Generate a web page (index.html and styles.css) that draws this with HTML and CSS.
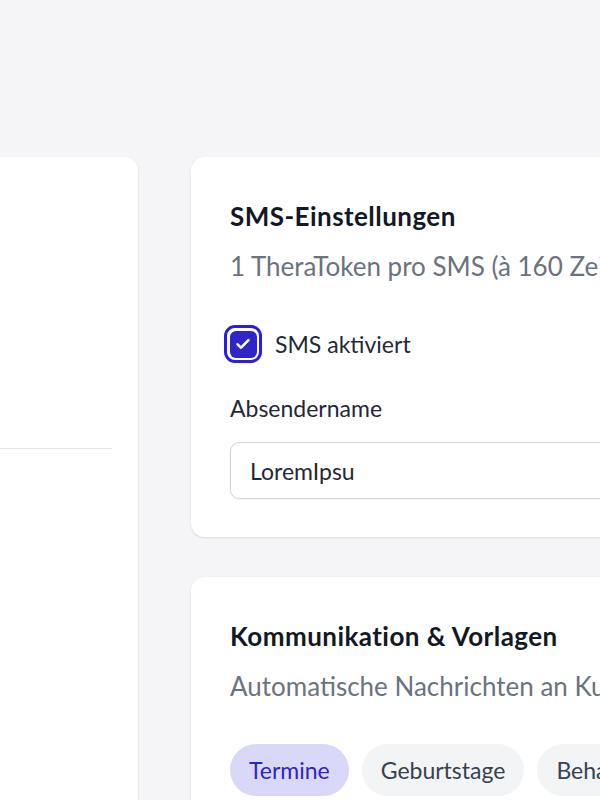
FILE: index.html
```html
<!DOCTYPE html>
<html lang="de">
<head>
<meta charset="utf-8">
<link rel="stylesheet" href="styles.css">
</head>
<body>
<div class="page">
  <div class="grid">
    <div class="col-left">
      <div class="card card-left">
        <div class="left-body"></div>
        <div class="sep"></div>
      </div>
    </div>
    <div class="col-right">
      <section class="card card-sms">
        <h2 class="title">SMS-Einstellungen</h2>
        <p class="subtitle">1 TheraToken pro SMS (à 160 Zeichen)</p>
        <label class="check-row">
          <span class="check-ring"><span class="check-box">
            <svg viewBox="0 0 18 18" width="18" height="18"><path d="M3.5 9.4l3.6 3.3 7.4-7.6" fill="none" stroke="#fff" stroke-width="2.6" stroke-linecap="round" stroke-linejoin="round"/></svg>
          </span></span>
          <span class="check-label">SMS aktiviert</span>
        </label>
        <div class="field-label">Absendername</div>
        <div class="input">LoremIpsu</div>
      </section>
      <section class="card card-comm">
        <h2 class="title">Kommunikation &amp; Vorlagen</h2>
        <p class="subtitle">Automatische Nachrichten an Kunden</p>
        <div class="chips">
          <span class="chip chip-active">Termine</span>
          <span class="chip">Geburtstage</span>
          <span class="chip">Behandlungen</span>
        </div>
      </section>
    </div>
  </div>
</div>
</body>
</html>
```

FILE: styles.css
```css
* { box-sizing: border-box; }
html, body { margin: 0; padding: 0; }
body {
  background: #f5f5f7;
  font-family: Lato, "Noto Sans", sans-serif;
  color: #111827;
  overflow: hidden;
  height: 800px;
}
.page {
  padding-top: 157px;
}
.grid {
  display: grid;
  grid-template-columns: 300px 700px;
  column-gap: 53px;
  margin-left: -162px;
  width: 1100px;
}
.card {
  background: #fff;
  border-radius: 14px;
  box-shadow: 0 1px 3px rgba(17, 24, 39, 0.08), 0 1px 2px rgba(17, 24, 39, 0.04);
}
.card-left {
  height: 700px;
  padding: 0 26px 0 0;
}
.left-body { height: 291px; }
.sep {
  height: 1px;
  background: #e5e7eb;
}
.col-right {
  display: flex;
  flex-direction: column;
  gap: 40px;
}
.card-sms, .card-comm {
  padding: 43px 39px 38px;
}
.title {
  margin: 0;
  font-size: 26px;
  line-height: 32px;
  font-weight: 700;
  letter-spacing: 0.45px;
  color: #111827;
}
.subtitle {
  margin: 19px 0 0;
  font-size: 26px;
  line-height: 30px;
  font-weight: 400;
  color: #6b7280;
  white-space: nowrap;
}
.check-row {
  display: flex;
  align-items: center;
  gap: 13px;
  margin-top: 44px;
}
.check-row .check-label { line-height: 30px; }
.check-ring {
  width: 38px;
  height: 38px;
  border: 3px solid #2a1ee6;
  border-radius: 11px;
  display: flex;
  align-items: center;
  justify-content: center;
  margin-left: -6px;
}
.check-box {
  width: 27px;
  height: 27px;
  border-radius: 6px;
  background: #2f25c9;
  display: flex;
  align-items: center;
  justify-content: center;
}
.check-label {
  font-size: 23px;
  color: #1f2937;
}
.field-label {
  margin-top: 31px;
  font-size: 23px;
  line-height: 28px;
  color: #1f2937;
}
.input {
  margin-top: 20px;
  height: 57px;
  border: 1px solid #d1d5db;
  border-radius: 9px;
  padding: 0 19px;
  display: flex;
  align-items: center;
  font-size: 23px;
  color: #1f2937;
  box-shadow: 0 1px 2px rgba(0,0,0,0.05);
}
.chips {
  display: flex;
  gap: 13px;
  margin-top: 43px;
}
.chip {
  display: inline-flex;
  align-items: center;
  height: 52px;
  padding: 0 19px;
  border-radius: 26px;
  background: #f3f4f6;
  color: #374151;
  font-size: 23px;
  white-space: nowrap;
}
.chip-active {
  background: #dad8f8;
  color: #3224c4;
}
```
